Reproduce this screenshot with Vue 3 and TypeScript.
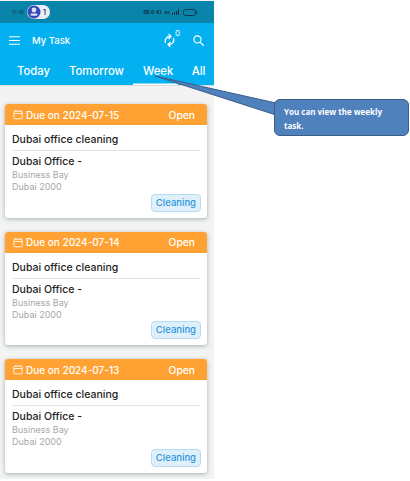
<template>
  <div class="page">
    <div class="phone">
      <div class="status-bar">
        <span class="clock">10:48</span>
        <span class="notify">
          <svg class="notify-icon" width="14" height="14" viewBox="0 0 14 14">
            <circle cx="7" cy="7" r="6.5" fill="#3347b8" />
            <circle cx="7" cy="5" r="2.4" fill="#dfe3f5" />
            <rect x="3.6" y="8.6" width="6.8" height="2.2" rx="1" fill="#dfe3f5" />
          </svg>
          <span class="notify-count">1</span>
        </span>
        <span class="status-right">
          <span class="net">56.0</span>
          <span class="net">Kl</span>
          <span class="net small">4G</span>
          <svg width="7" height="6" viewBox="0 0 7 6">
            <path d="M0 6V4h1v2zM2 6V3h1v3zM4 6V2h1v4zM6 6V0h1v6z" fill="#0d2c3c" />
          </svg>
          <svg class="battery" width="14" height="7" viewBox="0 0 14 7">
            <rect x="0.5" y="0.5" width="12" height="6" rx="2" fill="none" stroke="#0d3a4c" />
            <rect x="13" y="2.2" width="1" height="2.6" fill="#0d3a4c" />
          </svg>
        </span>
      </div>

      <header class="app-bar">
        <div class="toolbar">
          <svg class="menu-icon" width="11" height="9" viewBox="0 0 11 9">
            <path d="M0 .8h11M0 4.5h11M0 8.2h11" stroke="#fff" stroke-width="1.1" />
          </svg>
          <span class="title">My Task</span>
          <span class="sync">
            <svg width="11" height="13" viewBox="0 0 22 26" fill="none" stroke="#fff" stroke-width="2.6" stroke-linecap="round" stroke-linejoin="round">
              <path d="M3 17a9 9 0 0 1 9-12M19 9a9 9 0 0 1-9 12" />
              <path d="M10 1l4 4-4 4M12 17l-4 4 4 4" />
            </svg>
            <sup class="sync-count">0</sup>
          </span>
          <svg class="search-icon" width="11" height="11" viewBox="0 0 12 12" fill="none" stroke="#fff" stroke-width="1.3">
            <circle cx="4.8" cy="4.8" r="3.9" />
            <path d="M7.7 7.7l3.8 3.8" stroke-linecap="round" />
          </svg>
        </div>
        <nav class="tabs">
          <span
            v-for="tab in tabs"
            :key="tab"
            class="tab"
            :class="{ active: tab === 'Week' }"
          >{{ tab }}</span>
        </nav>
      </header>

      <main class="task-list">
        <article v-for="task in tasks" :key="task.due" class="card">
          <div class="card-head">
            <svg width="10" height="11" viewBox="0 0 12 12" fill="none" stroke="#fff" stroke-width="1">
              <rect x="1" y="2" width="10" height="9.2" rx="1.2" />
              <path d="M1 4.8h10M3.5 .6v2.2M8.5 .6v2.2" />
            </svg>
            <span class="due">Due on {{ task.due }}</span>
            <span class="state">Open</span>
          </div>
          <div class="card-body">
            <h2 class="task-name">Dubai office cleaning</h2>
            <h3 class="site">Dubai Office -</h3>
            <p class="address">Business Bay</p>
            <p class="address">Dubai 2000</p>
            <div class="card-foot">
              <span class="tag">Cleaning</span>
            </div>
          </div>
        </article>
      </main>
    </div>

    <!-- callout drawn on top of the screenshot -->
    <svg class="callout-arrow" width="140" height="60" viewBox="0 0 140 60">
      <path d="M1 1L122 28V40Z" fill="#4f81bd" stroke="#385d8a" stroke-width="1" />
    </svg>
    <div class="callout">You can view the weekly task.</div>
  </div>
</template>

<script setup lang="ts">
const tabs = ['Today', 'Tomorrow', 'Week', 'All']

const tasks = [
  { due: '2024-07-15' },
  { due: '2024-07-14' },
  { due: '2024-07-13' },
]
</script>

<style>
html,
body {
  margin: 0;
  background: #fff;
}
</style>

<style scoped>
.page {
  position: relative;
  width: 410px;
  height: 481px;
  overflow: hidden;
  background: #fff;
  font-family: Inter, 'Noto Sans', sans-serif;
}

.phone {
  width: 214px;
  height: 479px;
  background: #f3f3f3;
  overflow: hidden;
}

.status-bar {
  height: 22px;
  margin-top: 1px;
  background: #0a84aa;
  display: flex;
  align-items: center;
  padding: 0 12px;
  box-sizing: border-box;
}

.clock {
  font-size: 4.5px;
  color: #0d3a4c;
  width: 16px;
}

.notify {
  display: flex;
  align-items: center;
  height: 14px;
  width: 23px;
  margin-left: -1px;
  background: #e9edf6;
  border-radius: 7px;
}

.notify-count {
  font-size: 7px;
  font-weight: 600;
  margin-left: 2px;
  color: #25305f;
}

.status-right {
  margin-left: auto;
  display: flex;
  align-items: center;
  gap: 2px;
  margin-right: 5px;
}

.net {
  font-size: 5px;
  font-weight: 700;
  color: #0d2c3c;
}

.net.small {
  font-size: 4px;
  margin-left: 1px;
}

.battery {
  margin-left: 2px;
}

.app-bar {
  height: 62px;
  background: #03b0f0;
  display: flex;
  flex-direction: column;
  border-bottom: 1px solid #dcdcdc;
}

.toolbar {
  height: 34px;
  display: flex;
  align-items: center;
  padding: 0 10px 0 9px;
  color: #fff;
}

.title {
  font-size: 9.5px;
  font-weight: 500;
  margin-left: 12px;
}

.sync {
  margin-left: auto;
  display: flex;
  align-items: center;
  position: relative;
  margin-right: 18px;
}

.sync-count {
  position: absolute;
  left: 11px;
  top: -6px;
  font-size: 8px;
  line-height: 10px;
  margin: 0;
}

.tabs {
  display: flex;
  align-items: flex-end;
  height: 28px;
  padding-left: 7.5px;
}

.tab {
  font-size: 11.3px;
  font-weight: 500;
  color: #fff;
  line-height: 16px;
  padding: 0 9.5px;
  white-space: nowrap;
  box-sizing: border-box;
  height: 28px;
  display: flex;
  align-items: center;
}

.tab.active {
  padding-right: 5px;
  margin-right: 4px;
  box-shadow: inset 0 -1.5px 0 #fff;
}

.task-list {
  padding: 18px 7px 0 5px;
  display: flex;
  flex-direction: column;
  gap: 14px;
}

.card {
  height: 113.5px;
  background: #fff;
  border-radius: 3px;
  overflow: hidden;
  box-shadow: 0 1px 4px rgba(60, 90, 100, 0.45);
  display: flex;
  flex-direction: column;
}

.card-head {
  height: 21px;
  flex: none;
  background: #ffa233;
  color: #fff;
  display: flex;
  align-items: center;
  padding: 0 12px 0 8px;
  font-size: 10px;
  font-weight: 500;
}

.due {
  margin-left: 3px;
}

.state {
  margin-left: auto;
  font-size: 10.3px;
}

.card-body {
  flex: 1;
  padding: 0 7px 6px 7px;
  display: flex;
  flex-direction: column;
}

.task-name {
  margin: 0 0 4px;
  padding: 7px 0 3px;
  font-size: 10.5px;
  line-height: 15px;
  font-weight: 500;
  color: #222;
  border-bottom: 1px solid #e3e6e8;
}

.site {
  margin: 0;
  font-size: 10.5px;
  line-height: 14px;
  font-weight: 500;
  color: #222;
}

.address {
  margin: 0;
  font-size: 9px;
  line-height: 12px;
  color: #a8a8a8;
}

.card-foot {
  margin-top: auto;
  margin-right: -1px;
  display: flex;
  justify-content: flex-end;
}

.tag {
  font-size: 9.5px;
  font-weight: 500;
  color: #2b97dd;
  background: #dff0fb;
  border: 1px solid #b5dcf3;
  border-radius: 4px;
  padding: 2px 4px;
  line-height: 12px;
}

.callout-arrow {
  position: absolute;
  left: 154px;
  top: 75px;
}

.callout {
  position: absolute;
  left: 274px;
  top: 99px;
  width: 135px;
  height: 37px;
  box-sizing: border-box;
  background: #4f81bd;
  border: 1px solid #385d8a;
  border-radius: 6px;
  padding: 5px 8px 0 9px;
  color: #fff;
  font-family: 'Open Sans', sans-serif;
  font-size: 8px;
  font-weight: 700;
  line-height: 13.5px;
}
</style>
